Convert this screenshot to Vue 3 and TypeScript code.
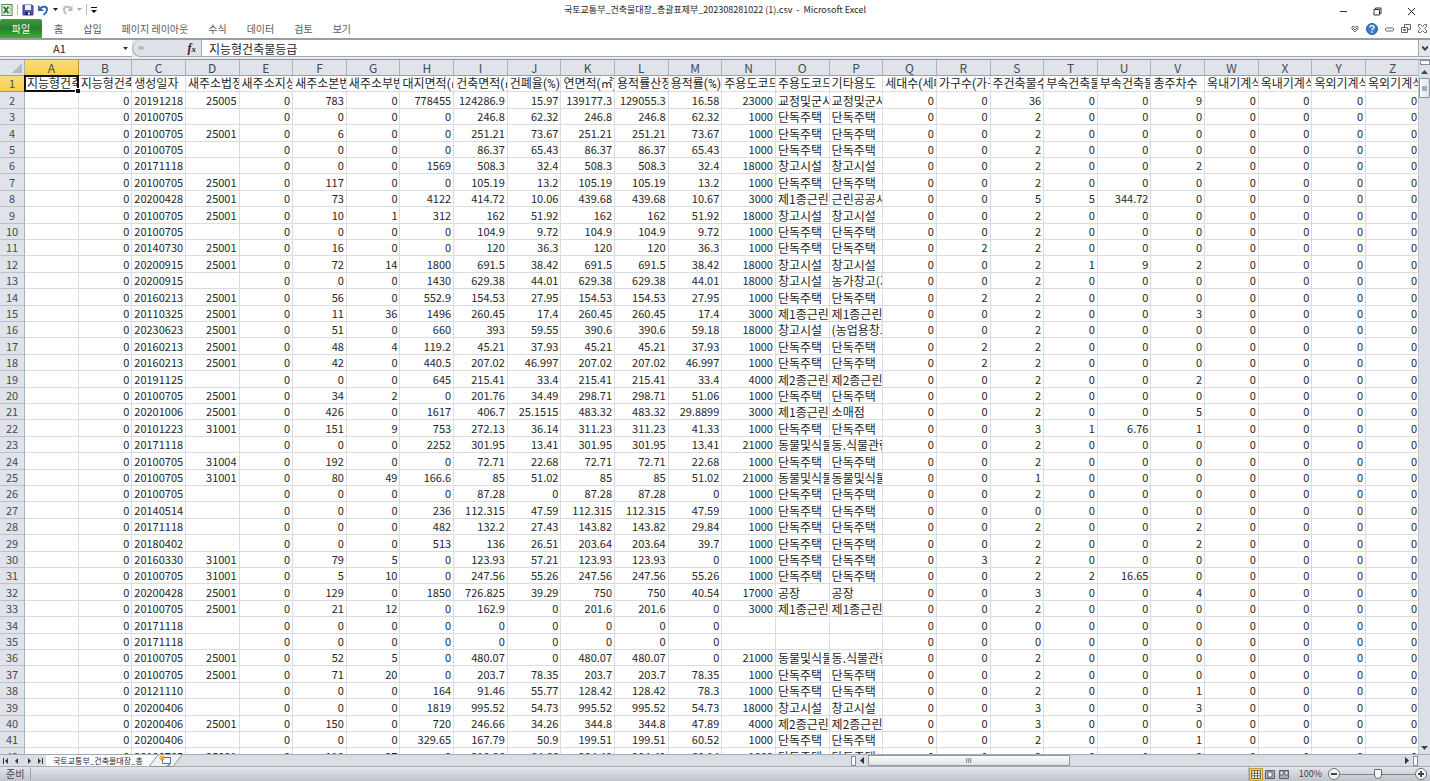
<script setup lang="ts">
import { ref } from 'vue'

interface Cell {
  text: string
  label: boolean
}

const letters: string[] = 'ABCDEFGHIJKLMNOPQRSTUVWXYZ'.split('')
const menus: string[] = ['홈', '삽입', '페이지 레이아웃', '수식', '데이터', '검토', '보기']

const titles: string[] = [
  '지능형건축물등급', '지능형건축물인증점수', '생성일자', '새주소법정동코드', '새주소지상지하코드',
  '새주소본번', '새주소부번', '대지면적(㎡)', '건축면적(㎡)', '건폐율(%)', '연면적(㎡)',
  '용적률산정연면적', '용적률(%)', '주용도코드', '주용도코드명', '기타용도', '세대수(세대)',
  '가구수(가구)', '주건축물수', '부속건축물수', '부속건축물면적', '총주차수',
  '옥내기계식대수', '옥내기계식면적', '옥외기계식대수', '옥외기계식면적',
]

// Columns: C D F G H I J K L M N O P R S T U V
const source = `20191218|25005|783|0|778455|124286.9|15.97|139177.3|129055.3|16.58|23000|교정및군사시설|교정및군사시설|0|36|0|0|9
20100705||0|0|0|246.8|62.32|246.8|246.8|62.32|1000|단독주택|단독주택|0|2|0|0|0
20100705|25001|6|0|0|251.21|73.67|251.21|251.21|73.67|1000|단독주택|단독주택|0|2|0|0|0
20100705||0|0|0|86.37|65.43|86.37|86.37|65.43|1000|단독주택|단독주택|0|2|0|0|0
20171118||0|0|1569|508.3|32.4|508.3|508.3|32.4|18000|창고시설|창고시설|0|2|0|0|2
20100705|25001|117|0|0|105.19|13.2|105.19|105.19|13.2|1000|단독주택|단독주택|0|2|0|0|0
20200428|25001|73|0|4122|414.72|10.06|439.68|439.68|10.67|3000|제1종근린생활시설|근린공공시설|0|5|5|344.72|0
20100705|25001|10|1|312|162|51.92|162|162|51.92|18000|창고시설|창고시설|0|2|0|0|0
20100705||0|0|0|104.9|9.72|104.9|104.9|9.72|1000|단독주택|단독주택|0|2|0|0|0
20140730|25001|16|0|0|120|36.3|120|120|36.3|1000|단독주택|단독주택|2|2|0|0|0
20200915|25001|72|14|1800|691.5|38.42|691.5|691.5|38.42|18000|창고시설|창고시설|0|2|1|9|2
20200915||0|0|1430|629.38|44.01|629.38|629.38|44.01|18000|창고시설|농가창고(가축)|0|2|0|0|0
20160213|25001|56|0|552.9|154.53|27.95|154.53|154.53|27.95|1000|단독주택|단독주택|2|2|0|0|0
20110325|25001|11|36|1496|260.45|17.4|260.45|260.45|17.4|3000|제1종근린생활시설|제1종근린생활시설|0|2|0|0|3
20230623|25001|51|0|660|393|59.55|390.6|390.6|59.18|18000|창고시설|(농업용창고)|0|2|0|0|0
20160213|25001|48|4|119.2|45.21|37.93|45.21|45.21|37.93|1000|단독주택|단독주택|2|2|0|0|0
20160213|25001|42|0|440.5|207.02|46.997|207.02|207.02|46.997|1000|단독주택|단독주택|2|2|0|0|0
20191125||0|0|645|215.41|33.4|215.41|215.41|33.4|4000|제2종근린생활시설|제2종근린생활시설|0|2|0|0|2
20100705|25001|34|2|0|201.76|34.49|298.71|298.71|51.06|1000|단독주택|단독주택|0|2|0|0|0
20201006|25001|426|0|1617|406.7|25.1515|483.32|483.32|29.8899|3000|제1종근린생활시설|소매점|0|2|0|0|5
20101223|31001|151|9|753|272.13|36.14|311.23|311.23|41.33|1000|단독주택|단독주택|0|3|1|6.76|1
20171118||0|0|2252|301.95|13.41|301.95|301.95|13.41|21000|동물및식물관련시설|동.식물관련시설|0|2|0|0|0
20100705|31004|192|0|0|72.71|22.68|72.71|72.71|22.68|1000|단독주택|단독주택|0|2|0|0|0
20100705|31001|80|49|166.6|85|51.02|85|85|51.02|21000|동물및식물관련시설|동물및식물관련시설|0|1|0|0|0
20100705||0|0|0|87.28|0|87.28|87.28|0|1000|단독주택|단독주택|0|2|0|0|0
20140514||0|0|236|112.315|47.59|112.315|112.315|47.59|1000|단독주택|단독주택|0|0|0|0|0
20171118||0|0|482|132.2|27.43|143.82|143.82|29.84|1000|단독주택|단독주택|0|2|0|0|2
20180402||0|0|513|136|26.51|203.64|203.64|39.7|1000|단독주택|단독주택|0|2|0|0|2
20160330|31001|79|5|0|123.93|57.21|123.93|123.93|0|1000|단독주택|단독주택|3|2|0|0|0
20100705|31001|5|10|0|247.56|55.26|247.56|247.56|55.26|1000|단독주택|단독주택|0|2|2|16.65|0
20200428|25001|129|0|1850|726.825|39.29|750|750|40.54|17000|공장|공장|0|3|0|0|4
20100705|25001|21|12|0|162.9|0|201.6|201.6|0|3000|제1종근린생활시설|제1종근린생활시설|0|2|0|0|0
20171118||0|0|0|0|0|0|0|0||||0|0|0|0|0
20171118||0|0|0|0|0|0|0|0||||0|0|0|0|0
20100705|25001|52|5|0|480.07|0|480.07|480.07|0|21000|동물및식물관련시설|동.식물관련시설|0|2|0|0|0
20100705|25001|71|20|0|203.7|78.35|203.7|203.7|78.35|1000|단독주택|단독주택|0|2|0|0|0
20121110||0|0|164|91.46|55.77|128.42|128.42|78.3|1000|단독주택|단독주택|0|2|0|0|1
20200406||0|0|1819|995.52|54.73|995.52|995.52|54.73|18000|창고시설|창고시설|0|3|0|0|3
20200406|25001|150|0|720|246.66|34.26|344.8|344.8|47.89|4000|제2종근린생활시설|제2종근린생활시설|0|3|0|0|0
20200406||0|0|329.65|167.79|50.9|199.51|199.51|60.52|1000|단독주택|단독주택|0|2|0|0|1
20100705|25001|110|27|0|210.86|64.66|204.49|204.49|60.14|1000|단독주택|단독주택|0|2|0|0|0`

const rows: Cell[][] = source.split('\n').map((line) => {
  const v = line.split('|')
  const full = ['', '0', v[0], v[1], '0', ...v.slice(2, 13), '0', ...v.slice(13), '0', '0', '0', '0']
  return full.map((text, i) => ({ text, label: i === 14 || i === 15 }))
})

const cellName = ref('A1')
const formula = ref('지능형건축물등급')
const zoom = ref(50)
</script>

<template>
  <div class="window">
    <header class="titlebar">
      <div class="quick">
        <svg class="excel" width="12" height="14" viewBox="0 0 13 14" aria-hidden="true">
          <rect x="1" y="1" width="11" height="12" fill="#e9f3e6" stroke="#3f8b45" />
          <path d="M9 3h2M9 5.500h2M9 8h2M9 10.500h2" stroke="#7fb07d" />
          <path d="M3 3.500l5 7M8 3.500l-5 7" stroke="#1e7a2d" stroke-width="2" />
        </svg>
        <i class="bar"></i>
        <button class="tool" aria-label="저장">
          <svg width="12" height="12" viewBox="0 0 12 12"><path d="M1 1h9l1 1v9H1z" fill="#5557b5" stroke="#3c3f94" /><path d="M3 1h6v5H3z" fill="#eef1fc" /><path d="M3 8h6v3H3z" fill="#26285f" /><path d="M6 8.500h2v2H6z" fill="#fff" /></svg>
        </button>
        <button class="tool" aria-label="실행 취소">
          <svg width="11" height="12" viewBox="0 0 11 12"><path d="M2 4.500C5 1.500 9.500 2.500 9 6c-.2 2-1.500 3.500-3.500 5" fill="none" stroke="#2f6cc0" stroke-width="2" /><path d="M0 1v6h6z" fill="#2f6cc0" /></svg>
        </button>
        <svg width="5" height="3" viewBox="0 0 5 3" aria-hidden="true"><path d="M0 0h5L2.500 3z" fill="#222" /></svg>
        <button class="tool redo" aria-label="다시 실행">
          <svg width="11" height="12" viewBox="0 0 11 12"><path d="M9 4.500C6 1.500 1.500 2.500 2 6c.2 2 1 3 2.500 4" fill="none" stroke="#b9bcc1" stroke-width="2" /><path d="M10.500 1v6h-5z" fill="#b9bcc1" /></svg>
        </button>
        <svg width="5" height="3" viewBox="0 0 5 3" aria-hidden="true"><path d="M0 0h5L2.500 3z" fill="#aaa" /></svg>
        <i class="bar"></i>
        <svg width="6" height="6" viewBox="0 0 6 6" aria-hidden="true"><path d="M0 0h6v1H0zM0 3h6L3 6z" fill="#111" /></svg>
      </div>
      <h1>국토교통부_건축물대장_총괄표제부_202308281022 (1).csv &nbsp;-&nbsp; Microsoft Excel</h1>
      <div class="controls">
        <button aria-label="최소화"><svg width="9" height="9" viewBox="0 0 9 9"><path d="M1 4.500h7" stroke="#333" /></svg></button>
        <button aria-label="이전 크기로"><svg width="9" height="9" viewBox="0 0 9 9"><path d="M1 2.500h5.500V8H1zM2.500 2.500V1H8v5.500H6.500" fill="none" stroke="#333" /></svg></button>
        <button aria-label="닫기"><svg width="9" height="9" viewBox="0 0 9 9"><path d="M1 1l7 7M8 1L1 8" stroke="#222" /></svg></button>
      </div>
    </header>

    <nav class="ribbon">
      <button class="file">파일</button>
      <button v-for="m in menus" :key="m" class="menu">{{ m }}</button>
      <div class="help">
        <button aria-label="리본 메뉴 최소화"><svg width="8" height="8" viewBox="0 0 8 8"><path d="M4 7L1 4V2l1-1 2 1.500L6 1l1 1v2zM2 3l2 2 2-2" fill="none" stroke="#666" /></svg></button>
        <button aria-label="도움말"><svg width="12" height="12" viewBox="0 0 12 12"><circle cx="6" cy="6" r="5.500" fill="#3c79cd" stroke="#2a5faa" /><path d="M4 4.500C4 2 8 2 8 4.300 8 5.800 6 5.700 6 7.300M6 8.300v1.400" fill="none" stroke="#fff" stroke-width="1.400" /></svg></button>
        <button aria-label="창 최소화"><svg width="9" height="8" viewBox="0 0 9 8"><rect x=".5" y="3" width="8" height="3" rx="1" fill="none" stroke="#666" /></svg></button>
        <button aria-label="창 복원"><svg width="10" height="9" viewBox="0 0 10 9"><path d="M3.500 3V.5h6v5H7M.5 3.500h6v5h-6zM2.500 5.500h2v1h-2z" fill="none" stroke="#666" /></svg></button>
        <button aria-label="창 닫기"><svg width="9" height="9" viewBox="0 0 9 9"><path d="M.5.5h2l2 2 2-2h2v2l-2 2 2 2v2h-2l-2-2-2 2h-2v-2l2-2-2-2z" fill="none" stroke="#666" /></svg></button>
      </div>
    </nav>

    <section class="formulabar">
      <input v-model="cellName" class="namebox" aria-label="이름 상자" />
      <button class="drop" aria-label="이름 목록"><svg width="5" height="3" viewBox="0 0 5 3"><path d="M0 0h5L2.500 3z" fill="#333" /></svg></button>
      <div class="fx">
        <i class="knob"></i>
        <button aria-label="함수 삽입"><em>f</em><em class="x">x</em></button>
      </div>
      <input v-model="formula" class="formula" aria-label="수식 입력줄" />
      <button class="expand" aria-label="수식 입력줄 확장"><svg width="6" height="5" viewBox="0 0 6 5"><path d="M0 .5l3 3 3-3" fill="none" stroke="#444" stroke-width="2" /></svg></button>
    </section>

    <main class="sheet">
      <div class="pane">
        <table>
          <colgroup>
            <col class="numcol" />
            <col v-for="l in letters" :key="l" />
          </colgroup>
          <thead>
            <tr>
              <th class="corner"><svg width="10" height="10" viewBox="0 0 10 10"><path d="M10 0v10H0z" fill="#b4bac2" /></svg></th>
              <th v-for="(l, i) in letters" :key="l" :class="{ active: i === 0 }" scope="col">{{ l }}</th>
            </tr>
          </thead>
          <tbody>
            <tr>
              <th class="active" scope="row">1</th>
              <td v-for="(t, i) in titles" :key="i" class="label" :class="{ selected: i === 0 }">
                <div class="clip">{{ t }}</div>
                <span v-if="i === 0" class="cursor"></span>
              </td>
            </tr>
            <tr v-for="(row, r) in rows" :key="r">
              <th scope="row">{{ r + 2 }}</th>
              <td v-for="(c, i) in row" :key="i" :class="{ label: c.label }">{{ c.text }}</td>
            </tr>
          </tbody>
        </table>
      </div>
      <aside class="vscroll">
        <i class="split"></i>
        <button class="arrow" aria-label="위로"><svg width="7" height="4" viewBox="0 0 7 4"><path d="M0 4h7L3.500 0z" fill="#444" /></svg></button>
        <i class="vthumb"><i></i></i>
        <button class="arrow down" aria-label="아래로"><svg width="7" height="4" viewBox="0 0 7 4"><path d="M0 0h7L3.500 4z" fill="#444" /></svg></button>
      </aside>
    </main>

    <footer>
      <div class="tabs">
        <div class="sheets">
          <div class="walk">
            <button aria-label="첫 시트"><svg width="6" height="6" viewBox="0 0 6 6"><path d="M0 0h1v6H0zM5 0v6L2 3z" fill="#333" /></svg></button>
            <button aria-label="이전 시트"><svg width="6" height="6" viewBox="0 0 6 6"><path d="M4 0v6L1 3z" fill="#333" /></svg></button>
            <button aria-label="다음 시트"><svg width="6" height="6" viewBox="0 0 6 6"><path d="M2 0v6l3-3z" fill="#333" /></svg></button>
            <button aria-label="마지막 시트"><svg width="6" height="6" viewBox="0 0 6 6"><path d="M5 0h1v6H5zM1 0v6l3-3z" fill="#333" /></svg></button>
          </div>
          <button class="tab">국토교통부_건축물대장_총</button>
          <button class="newtab" aria-label="시트 삽입">
            <svg width="36" height="12" viewBox="0 0 36 12"><path d="M0 0h10L1 12H0z" fill="#fff" /><path d="M10 0L1 11.500h24L34 0" fill="#eef1f5" stroke="#8e959e" /><path d="M14.500 2.500h8v6h-8z" fill="#fff" stroke="#5a6fa8" /><path d="M18 11.500l4-3v2z" fill="#5a6fa8" /><path d="M14 0v6M11 3h6M12 1l4 4M16 1l-4 4" stroke="#f09a2a" /></svg>
          </button>
        </div>
        <div class="hscroll">
          <i class="grip"></i>
          <button aria-label="왼쪽"><svg width="4" height="7" viewBox="0 0 4 7"><path d="M4 0v7L0 3.500z" fill="#333" /></svg></button>
          <div class="track"><i class="hthumb"><i></i></i></div>
          <button aria-label="오른쪽"><svg width="4" height="7" viewBox="0 0 4 7"><path d="M0 0v7l4-3.500z" fill="#333" /></svg></button>
          <i class="grip"></i>
        </div>
      </div>
      <div class="status">
        <span class="ready">준비</span>
        <div class="views">
          <button class="view on" aria-label="기본"><svg width="10" height="9" viewBox="0 0 10 9"><path d="M.5.500h9v8h-9zM3.500.500v8M6.500.500v8M.5 3.200h9M.5 5.800h9" fill="#fff" stroke="#6b6650" /></svg></button>
          <button class="view" aria-label="페이지 레이아웃"><svg width="10" height="9" viewBox="0 0 10 9"><path d="M.5.500h9v8h-9z" fill="#aab0b8" stroke="#5d636b" /><path d="M3 2h4v5H3z" fill="#fff" stroke="#5d636b" /></svg></button>
          <button class="view" aria-label="페이지 나누기 미리 보기"><svg width="10" height="9" viewBox="0 0 10 9"><path d="M.5.500h9v8h-9z" fill="#aab0b8" stroke="#5d636b" /><path d="M1 1h3v4H1zM6 1h3v4H6z" fill="#fff" stroke="#5d636b" /></svg></button>
          <span class="percent">100%</span>
          <button class="round" aria-label="축소"><svg width="12" height="12" viewBox="0 0 12 12"><circle cx="6" cy="6" r="5.500" fill="#f6f7f8" stroke="#6b7078" /><path d="M3 6h6" stroke="#444" stroke-width="2" /></svg></button>
          <input v-model="zoom" type="range" min="0" max="100" aria-label="확대/축소" />
          <button class="round" aria-label="확대"><svg width="12" height="12" viewBox="0 0 12 12"><circle cx="6" cy="6" r="5.500" fill="#f6f7f8" stroke="#6b7078" /><path d="M3 6h6M6 3v6" stroke="#444" stroke-width="2" /></svg></button>
        </div>
      </div>
    </footer>
  </div>
</template>

<style>
body {
  margin: 0;
  background: #fff;
}
</style>

<style scoped>
.window {
  display: flex;
  flex-direction: column;
  height: 100vh;
  overflow: hidden;
  background: #fff;
  color: #262626;
  font-family: "Noto Sans CJK KR", "Noto Sans", sans-serif;
  font-size: 10px;
}
* {
  box-sizing: border-box;
}
button,
input {
  margin: 0;
  padding: 0;
  border: 0;
  background: none;
  color: inherit;
  font: inherit;
}
svg {
  display: block;
  flex: none;
}
.titlebar {
  display: grid;
  grid-template-columns: 1fr auto 1fr;
  align-items: center;
  height: 19px;
}
.quick {
  display: flex;
  align-items: center;
  gap: 4px;
  padding-left: 1px;
}
.bar {
  width: 1px;
  height: 11px;
  background: #b5b8bc;
}
h1 {
  margin: 0;
  font-size: 9px;
  font-weight: 400;
  line-height: 19px;
  white-space: nowrap;
}
.controls {
  display: flex;
  justify-content: flex-end;
  gap: 25px;
  padding: 3px 14px 0 0;
}
.ribbon {
  display: flex;
  height: 19px;
  color: #5a5a5a;
  line-height: 18px;
}
.file {
  width: 42px;
  margin-right: 2px;
  border-radius: 2px 2px 0 0;
  background: linear-gradient(#3f9a45, #23802b 50%, #4aa83c);
  color: #fff;
}
.menu {
  padding: 0 10px;
}
.help {
  display: flex;
  align-items: center;
  gap: 7px;
  margin-left: auto;
  padding-right: 3px;
}
.formulabar {
  display: flex;
  height: 22px;
  border-top: 2px solid #9a9da1;
  border-bottom: 1px solid #9298a3;
  background: #e9ecf1;
  font-size: 12px;
}
.formulabar > * {
  height: 17px;
  border-bottom: 1px solid #a3a8b1;
}
.namebox {
  width: 119px;
  background: #fff;
  font-size: 11px;
  text-align: center;
}
.drop {
  width: 13px;
  padding-left: 4px;
  background: #fff;
}
.fx {
  display: flex;
  align-items: center;
  justify-content: space-between;
  width: 70px;
  padding: 0 5px;
  border-left: 1px solid #a3a8b1;
  border-right: 1px solid #a3a8b1;
  border-radius: 9px 0 0 9px;
  background: #dfe3e8;
}
.knob {
  width: 6px;
  height: 4px;
  border-radius: 3px;
  background: #b9bec5;
}
.fx button {
  font-family: "Liberation Serif", serif;
  font-size: 12px;
  font-weight: 700;
  line-height: 14px;
}
.x {
  font-size: 9px;
}
.formula {
  flex: 1;
  min-width: 0;
  padding-left: 7px;
  background: #fff;
}
.expand {
  display: flex;
  align-items: center;
  justify-content: center;
  width: 12px;
  border-left: 1px solid #a3a8b1;
  background: #e3e6eb;
}
.sheet {
  display: flex;
  flex: 1;
  min-height: 0;
}
.pane {
  flex: 1;
  min-width: 0;
  overflow: hidden;
}
table {
  width: calc(100% + 2px);
  border-collapse: separate;
  border-spacing: 0;
  table-layout: fixed;
}
.numcol {
  width: 25px;
}
th {
  padding: 0;
  border-right: 1px solid #a9b0b9;
  border-bottom: 1px solid #bcc2ca;
  background: #e0e4ea;
  color: #444b54;
  font-size: 11px;
  font-weight: 400;
  line-height: 15px;
  text-align: center;
}
thead th {
  height: 16px;
  border-bottom-color: #9aa1aa;
  font-size: 12px;
}
th.active {
  border-color: #c9902f;
  background: linear-gradient(#fbdc7c, #f9ce4d);
}
.corner svg {
  margin: 2px 2px 2px auto;
}
td {
  height: 16px;
  padding: 0 2px;
  overflow: hidden;
  border-right: 1px solid #d9dce0;
  border-bottom: 1px solid #d9dce0;
  font-size: 11px;
  line-height: 15px;
  text-align: right;
  white-space: nowrap;
}
tbody tr:nth-child(5n + 2) > *,
tbody tr:nth-child(5n + 4) > * {
  height: 17px;
}
td.label {
  font-size: 12px;
  text-align: left;
  text-overflow: clip;
}
.clip {
  height: 15px;
  margin-right: -2px;
  overflow: hidden;
  font-family: Roboto, "Noto Sans CJK KR", sans-serif;
  line-height: 17px;
}
.selected {
  position: relative;
  overflow: visible;
}
.cursor {
  position: absolute;
  inset: -1px;
  border: 2px solid #111;
}
.cursor::after {
  content: "";
  position: absolute;
  right: -3px;
  bottom: -3px;
  width: 4px;
  height: 4px;
  border-top: 1px solid #fff;
  border-left: 1px solid #fff;
  background: #111;
}
.vscroll {
  display: flex;
  flex-direction: column;
  align-items: center;
  width: 12px;
  border-left: 1px solid #c3c8cf;
  background: #dde1e7;
}
.split {
  width: 10px;
  height: 5px;
  border: 1px solid #858b94;
  background: #fff;
}
.arrow {
  display: flex;
  align-items: center;
  justify-content: center;
  width: 11px;
  height: 13px;
}
.down {
  margin-top: auto;
}
.vthumb {
  display: flex;
  align-items: center;
  justify-content: center;
  width: 11px;
  height: 20px;
  border: 1px solid #8d949e;
  border-radius: 1px;
  background: linear-gradient(90deg, #fafbfc, #dde1e7);
}
.vthumb i {
  width: 5px;
  height: 5px;
  background: #a7adb6;
}
.tabs {
  display: flex;
  height: 13px;
  border-top: 1px solid #a5abb4;
  border-bottom: 1px solid #a9afb7;
  background: #d9dee5;
}
.sheets {
  display: flex;
  flex: 3;
  min-width: 0;
}
.walk {
  display: flex;
  align-items: center;
  justify-content: space-around;
  width: 46px;
}
.tab {
  padding: 0 5px 0 7px;
  background: #fff;
  font-size: 8px;
  line-height: 11px;
  white-space: nowrap;
}
.hscroll {
  display: flex;
  flex: 2;
  align-items: center;
  gap: 4px;
  padding-right: 12px;
}
.grip {
  width: 5px;
  height: 10px;
  border: 1px solid #858b94;
  background: #fff;
}
.track {
  flex: 1;
}
.hthumb {
  display: flex;
  align-items: center;
  justify-content: center;
  width: 38%;
  height: 11px;
  border: 1px solid #9097a1;
  border-radius: 1px;
  background: linear-gradient(#fafbfc, #dfe3e8);
}
.hthumb i {
  width: 6px;
  height: 5px;
  background: repeating-linear-gradient(90deg, #9299a3 0 1px, #d5d9df 1px 2px);
}
.status {
  display: flex;
  align-items: center;
  justify-content: space-between;
  height: 14px;
  background: linear-gradient(#e2e5e9, #bfc4cb);
  color: #3d4249;
}
.ready {
  padding: 0 6px;
  border-right: 1px solid #a0a6ae;
  line-height: 12px;
}
.views {
  display: flex;
  align-items: center;
  padding-right: 3px;
  border-left: 1px solid #b0b5bc;
}
.view {
  display: flex;
  align-items: center;
  justify-content: center;
  width: 14px;
  height: 13px;
}
.on {
  border: 1px solid #c99a2e;
  background: #fbd75f;
}
.percent {
  padding: 0 6px 0 8px;
  font-size: 9px;
  line-height: 14px;
}
input[type="range"] {
  width: 75px;
  height: 12px;
  appearance: none;
}
input[type="range"]::-webkit-slider-runnable-track {
  height: 12px;
  background: linear-gradient(#80868e, #80868e) center / 100% 1px no-repeat;
}
input[type="range"]::-webkit-slider-thumb {
  width: 8px;
  height: 10px;
  margin-top: 1px;
  border: 1px solid #666c74;
  border-radius: 1px 1px 4px 4px;
  background: #f8f9fa;
  appearance: none;
}
</style>
